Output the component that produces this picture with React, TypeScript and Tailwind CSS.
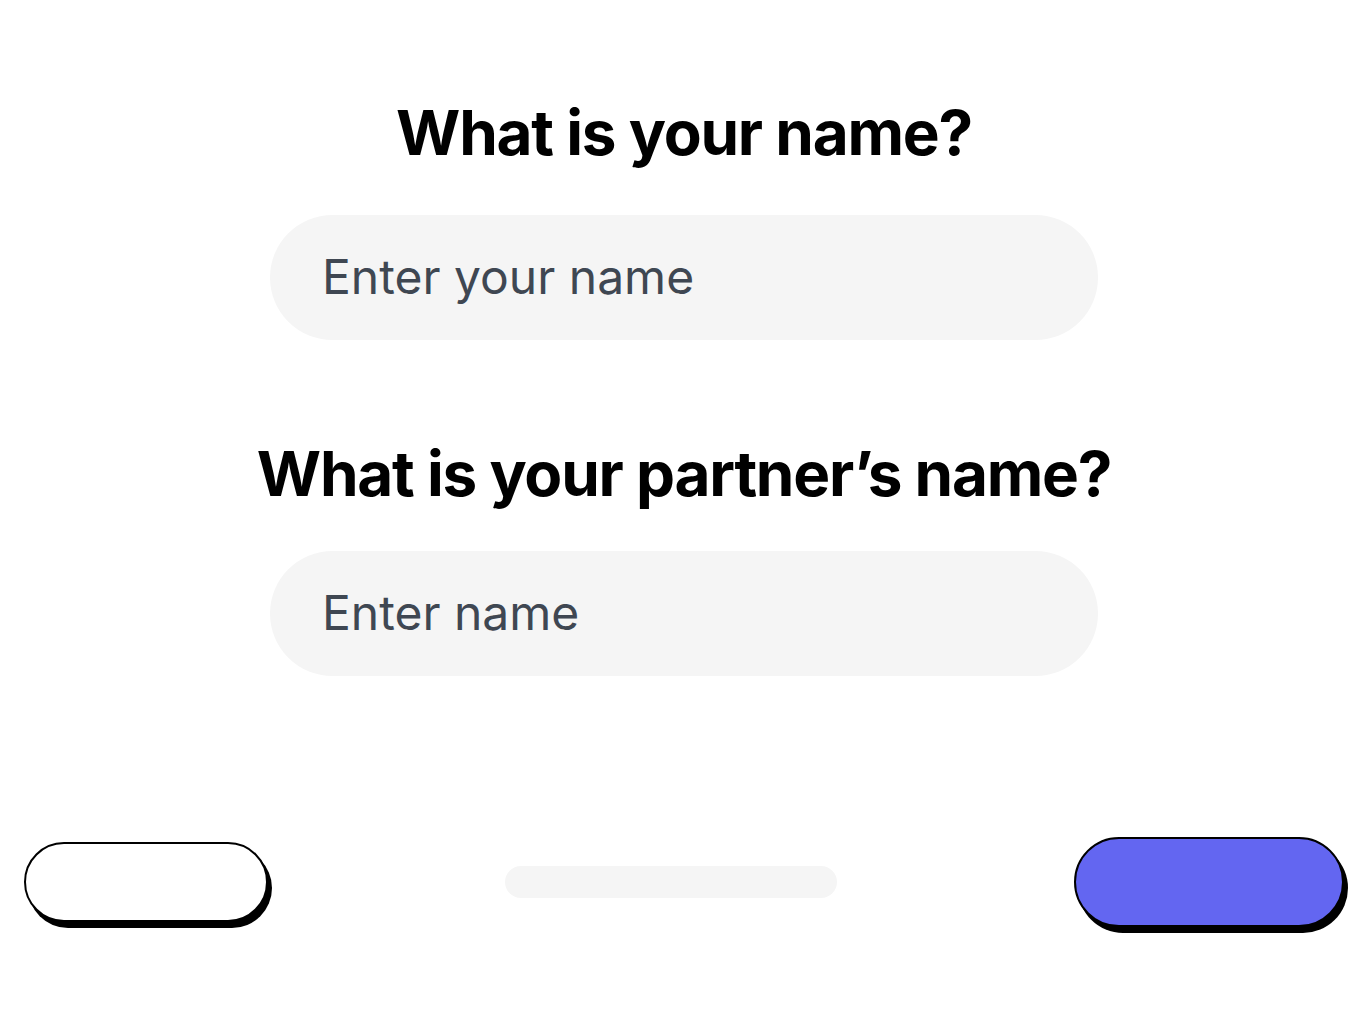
import React from "react";

const NameField = ({ placeholder }: { placeholder: string }) => (
  <input
    type="text"
    placeholder={placeholder}
    className="w-[828px] h-[125px] rounded-full bg-[#f5f5f5] pl-[52px] pr-12 pb-[3px] text-[48px] text-[#3f4752] placeholder:text-[#3f4752] outline-none font-['Inter',sans-serif]"
  />
);

const App = () => {
  return (
    <div className="w-full min-h-[1020px] bg-white flex flex-col font-['Inter',sans-serif]">
      <section className="flex flex-col items-center pt-[102px]">
        <h1 className="text-[62px] leading-none font-bold tracking-[-0.02em] text-black h-[62px]">
          What is your name?
        </h1>
        <div className="mt-[51px]">
          <NameField placeholder="Enter your name" />
        </div>
        <h1 className="mt-[103px] text-[62px] leading-none font-bold tracking-[-0.02em] text-black h-[62px]">
          What is your partner’s name?
        </h1>
        <div className="mt-[46px]">
          <NameField placeholder="Enter name" />
        </div>
      </section>

      <footer className="mt-[161px] px-6 flex items-center justify-between">
        <button className="w-[244px] h-[80px] rounded-full bg-white border-2 border-black shadow-[4px_6px_0_0_#000]" />
        <div className="w-[332px] h-8 rounded-full bg-[#f5f5f5]" />
        <button className="w-[270px] h-[90px] rounded-full bg-[#6366f1] border-2 border-black shadow-[4px_6px_0_0_#000]" />
      </footer>
    </div>
  );
};

export default App;
